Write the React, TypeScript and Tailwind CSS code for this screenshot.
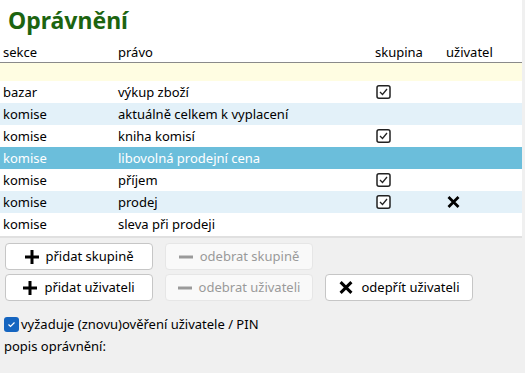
import React from "react";

const rows = [
  { s: "bazar", p: "výkup zboží", g: true, u: false },
  { s: "komise", p: "aktuálně celkem k vyplacení", g: false, u: false },
  { s: "komise", p: "kniha komisí", g: true, u: false },
  { s: "komise", p: "libovolná prodejní cena", g: false, u: false },
  { s: "komise", p: "příjem", g: true, u: false },
  { s: "komise", p: "prodej", g: true, u: true },
  { s: "komise", p: "sleva při prodeji", g: false, u: false },
];

function CheckBox() {
  return (
    <svg width="15" height="14" viewBox="0 0 15 14">
      <rect x="1" y="0.75" width="13" height="12.5" rx="2" fill="white" stroke="#222" strokeWidth="1.5" />
      <path d="M4 7 L6.5 9.5 L11 4" fill="none" stroke="#222" strokeWidth="1.3" />
    </svg>
  );
}

function XMark({ size = 15 }: { size?: number }) {
  return (
    <svg width={size} height={size - 3} viewBox="0 0 14 12">
      <path d="M2 1 L12 11 M12 1 L2 11" stroke="#000" strokeWidth="2.8" strokeLinecap="butt" />
    </svg>
  );
}

function Plus() {
  return (
    <svg width="14" height="14" viewBox="0 0 14 14">
      <path d="M7 0 V14 M0 7 H14" stroke="#000" strokeWidth="3" />
    </svg>
  );
}

function Minus() {
  return (
    <svg width="14" height="14" viewBox="0 0 14 14">
      <path d="M0 7 H14" stroke="#9a9a9a" strokeWidth="3" />
    </svg>
  );
}

function Btn({ icon, label, disabled }: { icon: React.ReactNode; label: string; disabled?: boolean }) {
  return (
    <div
      className={
        "w-[148px] h-[27px] rounded-[4px] flex items-center justify-center gap-[7px] border " +
        (disabled ? "bg-[#f9f9f9] border-[#e6e6e6] text-[#9a9a9a]" : "bg-white border-[#c6c6c6] text-black")
      }
    >
      {icon}
      <span>{label}</span>
    </div>
  );
}

export default function App() {
  return (
    <div
      className="w-[525px] h-[373px] bg-[#f0f0f0] text-[13px] leading-none text-black overflow-hidden"
      style={{ fontFamily: '"Noto Sans", "Open Sans", sans-serif' }}
    >
      <div className="bg-white w-[522px]">
        <div className="h-[43px] pl-[8px] pt-[5px] text-[23px] font-bold text-[#1c6410] leading-[30px]">Oprávnění</div>
        <div className="grid grid-cols-[118px_254px_71px_1fr] h-[20px] items-center border-b border-[#8a8a8a]">
          <div className="pl-[3px]">sekce</div>
          <div>právo</div>
          <div className="pl-[3px]">skupina</div>
          <div className="pl-[3px]">uživatel</div>
        </div>
        <div className="h-[18px] bg-[#fffde2]" />
        {rows.map((r, i) => {
          const sel = i === 3;
          const bg = sel ? "bg-[#6bbedb] text-white" : i % 2 === 1 ? "bg-[#e3f1f9]" : "bg-white";
          return (
            <div key={i} className={"grid grid-cols-[118px_254px_71px_1fr] h-[22px] items-center " + bg}>
              <div className="pl-[3px]">{r.s}</div>
              <div>{r.p}</div>
              <div className="pl-[4px] flex items-center">{r.g ? <CheckBox /> : null}</div>
              <div className="pl-[3px] flex items-center">{r.u ? <XMark /> : null}</div>
            </div>
          );
        })}
        <div className="h-[1px]" />
      </div>
      <div className="h-[2px] bg-[#e0e0e0] w-[522px]" />
      <div className="pl-[5px] pt-[5px] flex flex-col gap-[4px]">
        <div className="flex gap-[12px]">
          <Btn icon={<Plus />} label="přidat skupině" />
          <Btn icon={<Minus />} label="odebrat skupině" disabled />
        </div>
        <div className="flex gap-[12px]">
          <Btn icon={<Plus />} label="přidat uživateli" />
          <Btn icon={<Minus />} label="odebrat uživateli" disabled />
          <Btn icon={<XMark size={16} />} label="odepřít uživateli" />
        </div>
      </div>
      <div className="pl-[4px] pt-[16px] flex items-center gap-[2px]">
        <div className="w-[15px] h-[15px] rounded-[3px] bg-[#1565c0] flex items-center justify-center">
          <svg width="11" height="11" viewBox="0 0 11 11">
            <path d="M2.5 5.5 L4.5 7.5 L8.5 3.5" fill="none" stroke="white" strokeWidth="1.2" />
          </svg>
        </div>
        <span>vyžaduje (znovu)ověření uživatele / PIN</span>
      </div>
      <div className="pl-[4px] pt-[8px]">popis oprávnění:</div>
    </div>
  );
}
